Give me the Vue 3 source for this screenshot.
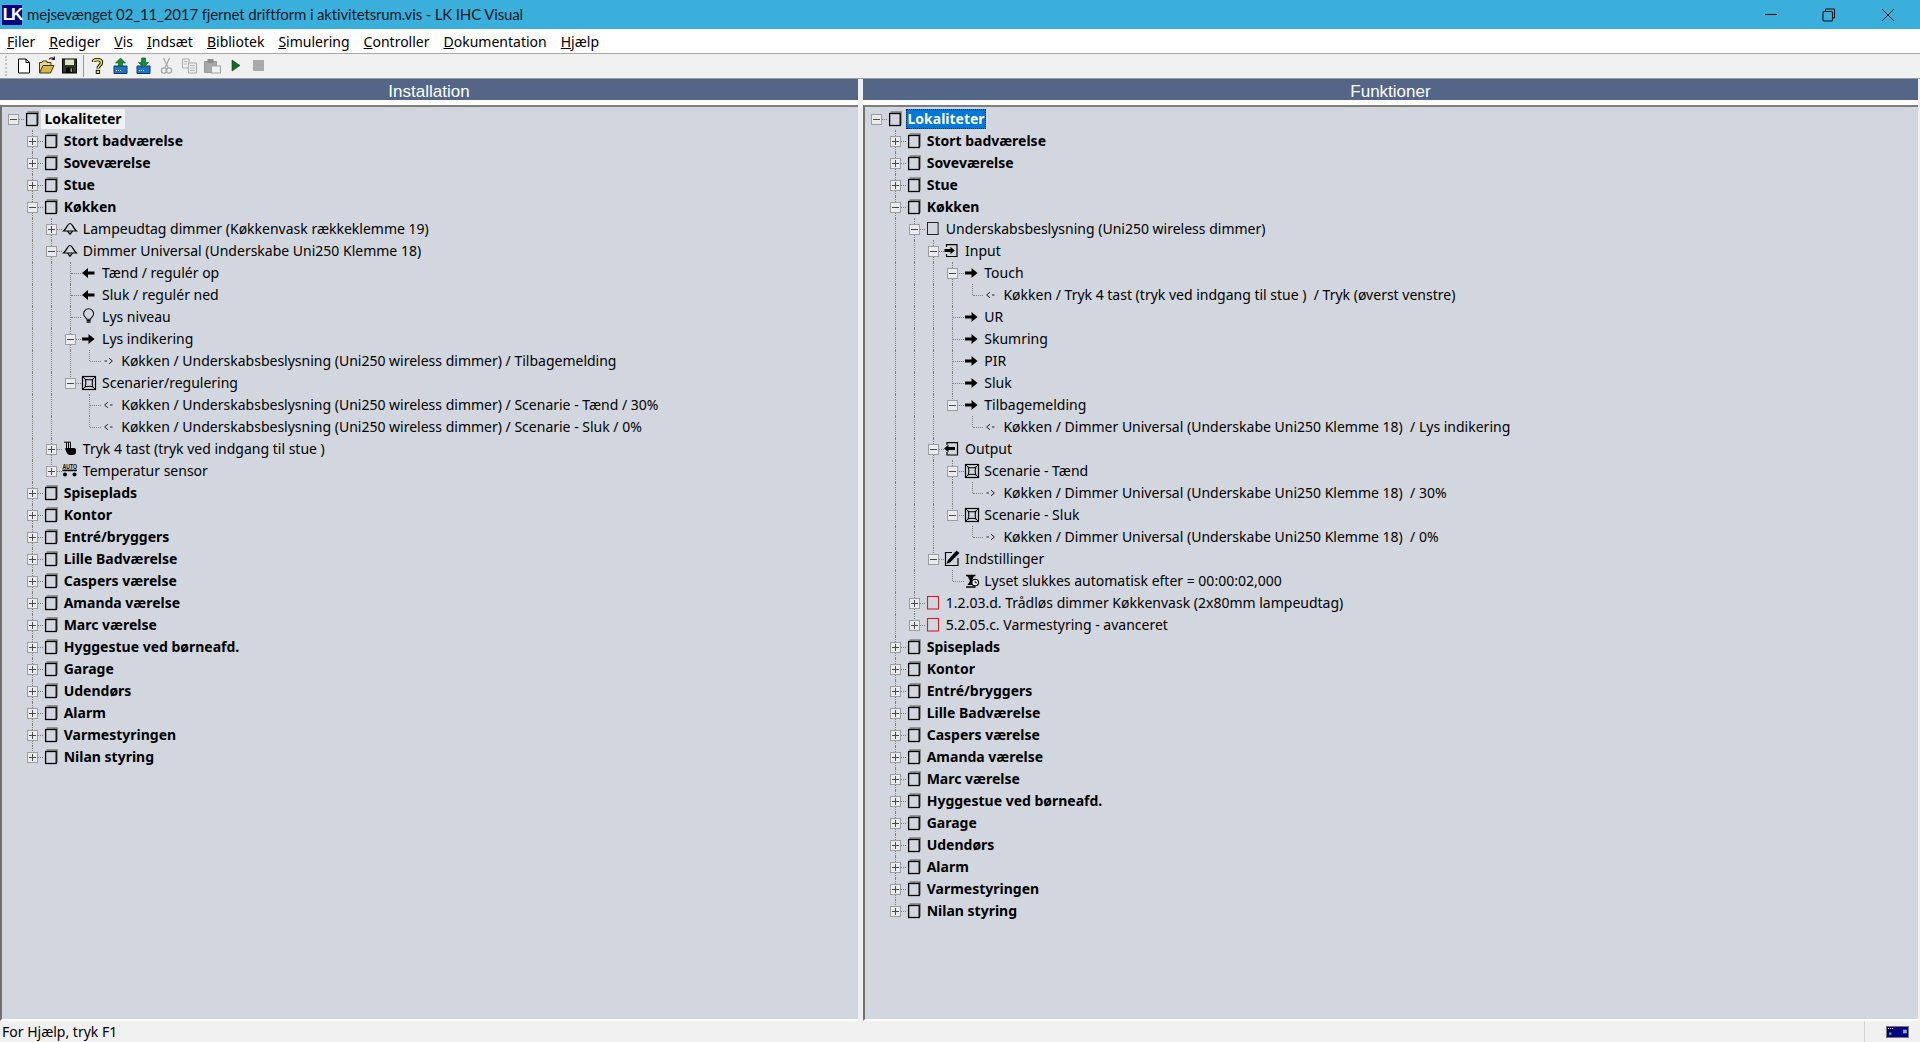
<script setup>
const menu = ['Filer', 'Rediger', 'Vis', 'Indsæt', 'Bibliotek', 'Simulering', 'Controller', 'Dokumentation', 'Hjælp']

const room = (text, children) => ({ text, icon: 'room', bold: true, children })
const rooms = ['Stort badværelse', 'Soveværelse', 'Stue']
const roomsAfter = ['Spiseplads', 'Kontor', 'Entré/bryggers', 'Lille Badværelse', 'Caspers værelse', 'Amanda værelse', 'Marc værelse', 'Hyggestue ved børneafd.', 'Garage', 'Udendørs', 'Alarm', 'Varmestyringen', 'Nilan styring']
const collapsed = (t) => room(t, null)
const leaf = (text, icon) => ({ text, icon })
const node = (text, icon, children) => ({ text, icon, children })
const shut = (text, icon) => ({ text, icon, children: null })

const kUnder = 'Køkken / Underskabsbeslysning (Uni250 wireless dimmer)'
const kDim = 'Køkken / Dimmer Universal (Underskabe Uni250 Klemme 18)'

const leftTree = {
  text: 'Lokaliteter', icon: 'room', bold: true, sel: 'inactive',
  children: [
    ...rooms.map(collapsed),
    room('Køkken', [
      shut('Lampeudtag dimmer (Køkkenvask rækkeklemme 19)', 'lamp'),
      node('Dimmer Universal (Underskabe Uni250 Klemme 18)', 'lamp', [
        leaf('Tænd / regulér op', 'left'),
        leaf('Sluk / regulér ned', 'left'),
        leaf('Lys niveau', 'bulb'),
        node('Lys indikering', 'right', [leaf(kUnder + ' / Tilbagemelding', 'out')]),
        node('Scenarier/regulering', 'scene', [
          leaf(kUnder + ' / Scenarie - Tænd / 30%', 'in'),
          leaf(kUnder + ' / Scenarie - Sluk / 0%', 'in')
        ])
      ]),
      shut('Tryk 4 tast (tryk ved indgang til stue )', 'touch'),
      shut('Temperatur sensor', 'auto')
    ]),
    ...roomsAfter.map(collapsed)
  ]
}

const rightTree = {
  text: 'Lokaliteter', icon: 'room', bold: true, sel: 'active',
  children: [
    ...rooms.map(collapsed),
    room('Køkken', [
      node('Underskabsbeslysning (Uni250 wireless dimmer)', 'plain', [
        node('Input', 'input', [
          node('Touch', 'right', [leaf('Køkken / Tryk 4 tast (tryk ved indgang til stue )  / Tryk (øverst venstre)', 'in')]),
          leaf('UR', 'right'),
          leaf('Skumring', 'right'),
          leaf('PIR', 'right'),
          leaf('Sluk', 'right'),
          node('Tilbagemelding', 'right', [leaf(kDim + '  / Lys indikering', 'in')])
        ]),
        node('Output', 'output', [
          node('Scenarie - Tænd', 'scene', [leaf(kDim + '  / 30%', 'out')]),
          node('Scenarie - Sluk', 'scene', [leaf(kDim + '  / 0%', 'out')])
        ]),
        node('Indstillinger', 'settings', [leaf('Lyset slukkes automatisk efter = 00:00:02,000', 'timer')])
      ]),
      shut('1.2.03.d. Trådløs dimmer Køkkenvask (2x80mm lampeudtag)', 'red'),
      shut('5.2.05.c. Varmestyring - avanceret', 'red')
    ]),
    ...roomsAfter.map(collapsed)
  ]
}

function flatten(root) {
  const out = [{ text: root.text, icon: root.icon, bold: root.bold, sel: root.sel, guides: [], isRoot: true, isLast: true, expander: 'minus' }]
  const walk = (n, guides, isLast) => {
    const hasKids = n.children !== undefined
    out.push({
      text: n.text, icon: n.icon, bold: n.bold, guides, isRoot: false, isLast,
      expander: hasKids ? (Array.isArray(n.children) ? 'minus' : 'plus') : null
    })
    if (Array.isArray(n.children)) {
      const next = [...guides, !isLast]
      n.children.forEach((c, i) => walk(c, next, i === n.children.length - 1))
    }
  }
  root.children.forEach((c, i) => walk(c, [false], i === root.children.length - 1))
  return out
}

const panes = [
  { title: 'Installation', rows: flatten(leftTree), cls: 'left' },
  { title: 'Funktioner', rows: flatten(rightTree), cls: 'right' }
]
</script>

<template>
  <div class="app">
    <svg class="defs" width="0" height="0" aria-hidden="true">
      <defs>
        <symbol id="i-room" viewBox="0 0 22 22">
          <path d="M4.6 4.3H15.8V17.8H14.4V5.8H4.6Z" fill="#7d7d7d" />
          <rect x="3.6" y="6.5" width="10.6" height="12" fill="none" stroke="#000" stroke-width="1.3" />
        </symbol>
        <symbol id="i-plain" viewBox="0 0 22 22">
          <rect x="3.5" y="5.5" width="10.6" height="12" fill="none" stroke="#222" stroke-width="1" />
        </symbol>
        <symbol id="i-red" viewBox="0 0 22 22">
          <rect x="3.5" y="5.5" width="11" height="12.5" fill="none" stroke="#cf2028" stroke-width="1.1" />
        </symbol>
        <symbol id="i-lamp" viewBox="0 0 22 22">
          <path d="M9 6.5C6.4 6.5 6.6 10.4 2.6 14H15.4C11.4 10.4 11.6 6.5 9 6.5Z" fill="none" stroke="#000" stroke-width="1.2" />
          <path d="M6.5 14.2L9 17.2L11.5 14.2" fill="none" stroke="#000" stroke-width="1.2" />
        </symbol>
        <symbol id="i-left" viewBox="0 0 22 22">
          <path d="M2 12L8 7V10.4H14.5V13.6H8V17Z" fill="#000" />
        </symbol>
        <symbol id="i-right" viewBox="0 0 22 22">
          <path d="M14.5 12L8.5 7V10.4H2V13.6H8.5V17Z" fill="#000" />
        </symbol>
        <symbol id="i-bulb" viewBox="0 0 22 22">
          <path d="M6.6 14.2C6.4 12.2 3.6 11.6 3.6 8.8A5 5 0 0 1 13.6 8.8C13.6 11.6 10.8 12.2 10.6 14.2Z" fill="none" stroke="#111" stroke-width="1.1" />
          <path d="M6.6 15.6H10.6M6.6 17.2H10.6" stroke="#111" stroke-width="1.2" />
        </symbol>
        <symbol id="i-out" viewBox="0 0 22 22">
          <path d="M4.5 12H7M9 9.2L12.4 12L9 14.8" fill="none" stroke="#222" stroke-width="1" />
        </symbol>
        <symbol id="i-in" viewBox="0 0 22 22">
          <path d="M8 9.2L4.6 12L8 14.8M10 12H12.5" fill="none" stroke="#222" stroke-width="1" />
        </symbol>
        <symbol id="i-scene" viewBox="0 0 22 22">
          <rect x="2.5" y="5.5" width="13" height="13" fill="none" stroke="#000" stroke-width="1.2" />
          <path d="M5.2 8.2C6.8 9 11.2 9 12.8 8.2C12 9.8 12 14.2 12.8 15.8C11.2 15 6.8 15 5.2 15.8C6 14.2 6 9.8 5.2 8.2Z" fill="none" stroke="#000" stroke-width="1.1" />
          <path d="M2.8 5.8L5.2 8.2M15.2 5.8L12.8 8.2M2.8 18.2L5.2 15.8M15.2 18.2L12.8 15.8" stroke="#000" stroke-width="1" />
        </symbol>
        <symbol id="i-touch" viewBox="0 0 22 22">
          <path d="M3 5.2H9.5" stroke="#000" stroke-width="1" />
          <path d="M5.5 5V11M7.5 5V11M9.5 5V11" stroke="#000" stroke-width="1" />
          <path d="M4 11.5L5 11H13C14.6 11 15 12 15 13.4V15C15 17 13.6 18 11.5 18H9C7.2 18 6.4 17 5.6 15.6Z" fill="#000" />
        </symbol>
        <symbol id="i-auto" viewBox="0 0 22 22">
          <text x="1.4" y="9.6" font-family="'Liberation Sans',sans-serif" font-size="6.6" font-weight="700" textLength="14.6" lengthAdjust="spacingAndGlyphs" fill="#000">AUTO</text>
          <rect x="1.5" y="10.6" width="14.5" height="1.6" fill="#000" />
          <circle cx="4" cy="15.6" r="2" fill="#000" />
          <circle cx="13.5" cy="15.6" r="2" fill="#000" />
        </symbol>
        <symbol id="i-input" viewBox="0 0 22 22">
          <path d="M3.5 8V5.6H14V17.5H3.5V15" fill="none" stroke="#000" stroke-width="1.2" />
          <path d="M11.8 11.5L7.5 7.8V10H1.5V13H7.5V15.2Z" fill="#000" />
        </symbol>
        <symbol id="i-output" viewBox="0 0 22 22">
          <path d="M4 8V5.6H14.5V18H4V15" fill="none" stroke="#000" stroke-width="1.2" />
          <path d="M1 11.5L5.5 7.8V10H12V13H5.5V15.2Z" fill="#000" />
        </symbol>
        <symbol id="i-settings" viewBox="0 0 22 22">
          <path d="M9 5.5H2.5V18.5H15V11" fill="none" stroke="#000" stroke-width="1.2" />
          <path d="M13.5 3.5L16.5 6L7 15.5L3.5 17L5 13Z" fill="#000" />
        </symbol>
        <symbol id="i-timer" viewBox="0 0 22 22">
          <path d="M3 6.5H12.5M3 18H12.5" stroke="#000" stroke-width="1.6" />
          <path d="M4.5 7H11L8.6 12L11 16H4.5L7 12Z" fill="#000" />
          <circle cx="12.2" cy="13.6" r="3.3" fill="#f4f4f4" stroke="#000" stroke-width="1.1" />
          <path d="M12.2 11.8V13.8H14" fill="none" stroke="#000" stroke-width="0.9" />
        </symbol>
      </defs>
    </svg>

    <header class="titlebar">
      <span class="logo">LK</span>
      <span class="title">mejsevænget 02_11_2017 fjernet driftform i aktivitetsrum.vis - LK IHC Visual</span>
      <div class="winctl">
        <span class="winbtn">
          <svg width="14" height="14" viewBox="0 0 14 14"><path d="M1 6.5H13" stroke="#111" stroke-width="1.1" /></svg>
        </span>
        <span class="winbtn">
          <svg width="14" height="14" viewBox="0 0 14 14"><path d="M3.5 3V1H12.5V10H10.5" fill="none" stroke="#111" stroke-width="1" /><rect x="1" y="3.5" width="9.5" height="9.5" rx="1" fill="none" stroke="#111" stroke-width="1.1" /></svg>
        </span>
        <span class="winbtn">
          <svg width="14" height="14" viewBox="0 0 14 14"><path d="M1 1L13 13M13 1L1 13" stroke="#111" stroke-width="1" /></svg>
        </span>
      </div>
    </header>

    <nav class="menubar">
      <span v-for="m in menu" :key="m" class="menuitem"><u>{{ m[0] }}</u>{{ m.slice(1) }}</span>
    </nav>

    <div class="toolbar">
      <span class="gripper"></span>
      <svg class="tool" viewBox="0 1.5 23 24"><path d="M6.5 6.5H14L17.5 10V20.5H6.5Z" fill="#fff" stroke="#000" /><path d="M14 6.5V10H17.5" fill="none" stroke="#000" /></svg>
      <svg class="tool" viewBox="0 1.5 23 24"><path d="M4.5 20V10H7L8 8.5H12V10H16V13" fill="#e8d88a" stroke="#3a3a10" /><path d="M4.5 20.5L8 13H19L15.5 20.5Z" fill="#d9b84a" stroke="#3a3a10" /><path d="M14 7C15.5 5 17.5 5 19 6.5M19.4 4V7H16.6" fill="none" stroke="#222" stroke-width="1.2" /></svg>
      <svg class="tool" viewBox="0 1.5 23 24"><rect x="4.5" y="6.5" width="14" height="14" fill="#2f3a22" stroke="#000" /><rect x="7" y="7" width="9" height="5.5" fill="#dfe6c8" /><rect x="8" y="15" width="7" height="5.5" fill="#050505" /><rect x="12.5" y="15.8" width="1.6" height="3.6" fill="#9aa088" /></svg>
      <span class="toolsep"></span>
      <svg class="tool" viewBox="0 1.5 23 24"><path d="M7.5 9.5C7.5 6.5 15.5 6 15.5 10C15.5 13 12 13 12 16" fill="none" stroke="#000" stroke-width="3.4" /><path d="M7.5 9.5C7.5 6.5 15.5 6 15.5 10C15.5 13 12 13 12 16" fill="none" stroke="#f5e33a" stroke-width="1.6" /><rect x="10.2" y="17.8" width="3.4" height="3.2" fill="#f5e33a" stroke="#000" stroke-width="0.9" /></svg>
      <svg class="tool" viewBox="0 1.5 23 24"><path d="M5 13.5H18V21H5Z" fill="#1e72c8" stroke="#0c3a6e" /><path d="M7 18H13" stroke="#fff" stroke-dasharray="1 1" /><path d="M11.5 5.5L16.5 10.5H13.5V14H9.5V10.5H6.5Z" fill="#138a34" stroke="#0a4a1c" stroke-width="0.6" /></svg>
      <svg class="tool" viewBox="0 1.5 23 24"><path d="M5 13.5H18V21H5Z" fill="#1e72c8" stroke="#0c3a6e" /><path d="M7 18H13" stroke="#fff" stroke-dasharray="1 1" /><path d="M11.5 15L16.5 10H13.5V5.5H9.5V10H6.5Z" fill="#138a34" stroke="#0a4a1c" stroke-width="0.6" /></svg>
      <svg class="tool" viewBox="0 1.5 23 24"><path d="M8.5 5.5L13 15M14.5 5.5L10 15" stroke="#a8a8a8" stroke-width="1.3" fill="none" /><circle cx="9" cy="18" r="2.6" fill="none" stroke="#a8a8a8" stroke-width="1.3" /><circle cx="14" cy="18" r="2.6" fill="none" stroke="#a8a8a8" stroke-width="1.3" /></svg>
      <svg class="tool" viewBox="0 1.5 23 24"><path d="M4.5 6.5H11V15.5H4.5Z" fill="#f0f0f0" stroke="#aaa" /><path d="M10.5 10.5H18.5V20.5H10.5Z" fill="#f0f0f0" stroke="#aaa" /><path d="M6 9H9.5M6 11.5H9M12 13H17M12 15.5H17M12 18H17" stroke="#b4b4b4" /></svg>
      <svg class="tool" viewBox="0 1.5 23 24"><path d="M3.5 9H15.5V20H3.5Z" fill="#a8a8a8" stroke="#9a9a9a" /><rect x="6.5" y="6.5" width="6" height="4" fill="#8c8c8c" /><rect x="10.5" y="13.5" width="9" height="7" fill="#f0f0f0" stroke="#a0a0a0" /></svg>
      <svg class="tool" viewBox="0 1.5 23 24"><path d="M8 7.5L16 13L8 18.5Z" fill="#0f6b2a" stroke="#06391a" stroke-width="0.6" /></svg>
      <svg class="tool" viewBox="0 1.5 23 24"><rect x="6" y="7.5" width="11" height="11" fill="#a9a9a9" /></svg>
    </div>

    <main class="panes">
      <section v-for="p in panes" :key="p.title" class="pane" :class="p.cls">
        <h2 class="pane-head">{{ p.title }}</h2>
        <div class="tree">
          <div v-for="(r, i) in p.rows" :key="i" class="row">
            <span v-for="(g, j) in r.guides" :key="j" class="cell" :class="{ guide: g }"></span>
            <span class="cell conn" :class="{ 'is-root': r.isRoot, 'is-last': r.isLast }">
              <span v-if="r.expander" class="exp" :class="r.expander"></span>
            </span>
            <svg class="ico"><use :href="'#i-' + r.icon" width="22" height="22" /></svg>
            <span class="label" :class="[{ bold: r.bold }, r.sel]">{{ r.text }}</span>
          </div>
        </div>
      </section>
    </main>

    <footer class="statusbar">
      <span class="status-text">For Hjælp, tryk F1</span>
      <span class="status-tray">
        <svg width="23" height="12" viewBox="0 0 23 12"><rect x="0.5" y="0.5" width="22" height="11" fill="#000080" stroke="#777" /><path d="M2 2.5H3M4 2.5H5M6 2.5H7" stroke="#fff" /><rect x="3" y="6.5" width="2.4" height="2.4" fill="#28c060" /><rect x="17.5" y="4" width="3" height="3" fill="#9a9ad0" stroke="#ccc" stroke-width="0.5" /></svg>
      </span>
    </footer>
  </div>
</template>

<style scoped>
.app {
  display: flex;
  flex-direction: column;
  width: 1920px;
  height: 1042px;
  overflow: hidden;
  background: #f0f0f0;
  color: #000;
  font-family: "Noto Sans", "Liberation Sans", sans-serif;
  font-size: 14px;
}
.defs { display: block; height: 0; }

.titlebar {
  flex: 0 0 29px;
  display: flex;
  align-items: center;
  background: #3aafdc;
  color: #0a1a24;
  padding-left: 2px;
}
.logo {
  flex: 0 0 20px;
  height: 20px;
  margin-right: 5px;
  background: #00007f;
  color: #fff;
  font: 700 17px/20px "Liberation Sans", sans-serif;
  letter-spacing: -2px;
  text-align: center;
}
.title {
  font-family: "Lato", sans-serif;
  font-size: 15px;
  letter-spacing: -0.15px;
  font-variant-ligatures: none;
  padding-bottom: 1px;
}
.winctl { display: flex; margin-left: auto; padding-right: 3px; }
.winbtn { width: 58.4px; display: flex; justify-content: center; }

.menubar {
  flex: 0 0 24px;
  display: flex;
  align-items: center;
  gap: 14px;
  padding-left: 7px;
  background: #fff;
  border-bottom: 1px solid #a9a9a9;
}

.toolbar {
  flex: 0 0 24px;
  display: flex;
  align-items: center;
  padding-left: 5px;
  border-bottom: 1px solid #9a9a9a;
  background: #f0f0f0;
}
.gripper {
  width: 3px;
  height: 20px;
  margin-right: 2px;
  border-left: 2px dotted #c4c4c4;
}
.tool { width: 23px; height: 24px; flex: 0 0 23px; }
.toolsep { width: 1px; height: 22px; margin: 0 2px 0 2px; background: #9a9a9a; }

.panes {
  flex: 1;
  min-height: 0;
  display: flex;
  gap: 5px;
  padding-right: 2px;
  background: #f0f0f0;
}
.pane { display: flex; flex-direction: column; min-width: 0; }
.pane.left { flex: 0 0 858px; }
.pane.right { flex: 1; }
.pane-head {
  flex: 0 0 21px;
  box-sizing: border-box;
  margin: 0;
  padding-top: 4px;
  background: #536688;
  color: #fff;
  text-align: center;
  font: 400 17px/17px "Liberation Sans", sans-serif;
}
.tree {
  flex: 1;
  min-height: 0;
  margin-top: 5px;
  padding: 1px 0 0 1.7px;
  background: #d2d7df;
  border-top: 2px solid #7e7e7e;
  border-left: 2px solid #6f6f6f;
  border-bottom: 2px solid #fff;
  box-shadow: 0 -5px 0 #fff;
  overflow: hidden;
}
.row {
  height: 22px;
  display: flex;
  align-items: center;
  white-space: pre;
}
.cell {
  flex: 0 0 19.2px;
  height: 22px;
  position: relative;
  display: flex;
  align-items: center;
  justify-content: center;
}
.guide::before {
  content: "";
  position: absolute;
  left: 9px;
  top: 0;
  bottom: 0;
  border-left: 1px dotted #7c7c7c;
}
.conn::before {
  content: "";
  position: absolute;
  left: 9px;
  top: 0;
  bottom: 0;
  border-left: 1px dotted #7c7c7c;
}
.conn.is-last::before { bottom: 50%; }
.conn.is-root::before { display: none; }
.conn::after {
  content: "";
  position: absolute;
  left: 10px;
  right: -1px;
  top: 11px;
  border-top: 1px dotted #7c7c7c;
}
.exp {
  position: relative;
  z-index: 1;
  width: 11px;
  height: 11px;
  box-sizing: border-box;
  border: 1px solid #9d9d9d;
  background: #e9ebee;
  margin-left: -0.4px;
}
.exp::before {
  content: "";
  position: absolute;
  left: 1px;
  right: 1px;
  top: 4px;
  height: 1px;
  background: #4a4a4a;
}
.exp.plus::after {
  content: "";
  position: absolute;
  top: 1px;
  bottom: 1px;
  left: 4px;
  width: 1px;
  background: #4a4a4a;
}
.ico { flex: 0 0 22px; width: 22px; height: 22px; overflow: visible; margin: -1px -2.4px 1px 0; }
.label { line-height: 20px; margin-left: 2px; }
.bold { font-weight: 700; }
.inactive { background: #f0f1f3; padding: 0 3px; margin-left: -1px; }
.active {
  background: #0078d7;
  color: #fff;
  outline: 1px dotted #1a1a1a;
  outline-offset: -1px;
  padding: 0 1px;
  margin-left: 1px;
}

.statusbar {
  flex: 0 0 21px;
  display: flex;
  align-items: center;
  justify-content: space-between;
  background: #f0f0f0;
  padding-left: 2px;
}
.status-tray {
  align-self: stretch;
  width: 56px;
  display: flex;
  align-items: center;
  padding-left: 21px;
  box-sizing: border-box;
  border-left: 1px solid #d4d4d4;
}
</style>

<style>
html, body { margin: 0; overflow: hidden; }
</style>
